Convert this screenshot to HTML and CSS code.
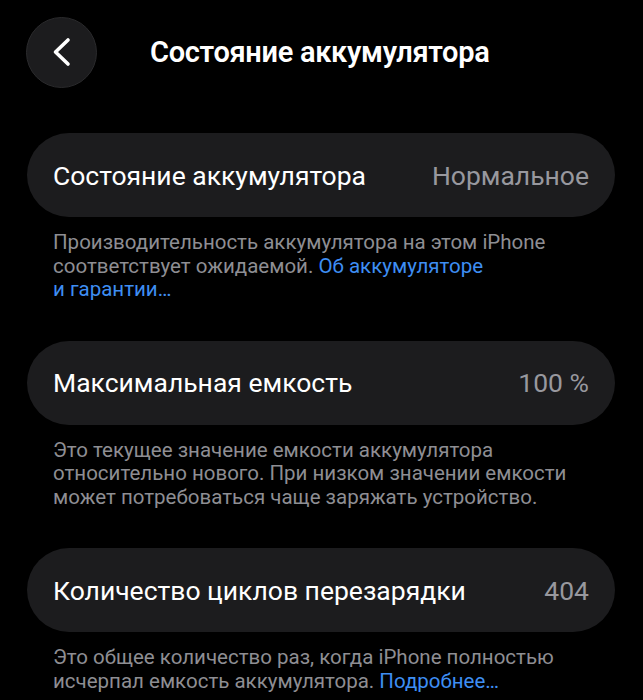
FILE: index.html
```html
<!DOCTYPE html>
<html>
<head>
    <title>Состояние аккумулятора</title>
    <link rel="stylesheet" href="styles.css">
</head>
<body>
    <header class="nav">
        <button class="back" aria-label="Назад">
            <svg width="20" height="30" viewBox="0 0 20 30">
                <path d="M16 3 L3.5 15 L16 27" fill="none" stroke="#fff" stroke-width="3.6" stroke-linecap="round" stroke-linejoin="round"/>
            </svg>
        </button>
        <h1 class="title">Состояние аккумулятора</h1>
    </header>

    <section class="group">
        <div class="cell">
            <span class="label">Состояние аккумулятора</span>
            <span class="value">Нормальное</span>
        </div>
        <p class="note">Производительность аккумулятора на этом iPhone соответствует ожидаемой. <a href="#">Об аккумуляторе и&nbsp;гарантии…</a></p>
    </section>

    <section class="group">
        <div class="cell">
            <span class="label">Максимальная емкость</span>
            <span class="value">100 %</span>
        </div>
        <p class="note">Это текущее значение емкости аккумулятора относительно нового. При низком значении емкости может потребоваться чаще заряжать устройство.</p>
    </section>

    <section class="group">
        <div class="cell">
            <span class="label">Количество циклов перезарядки</span>
            <span class="value">404</span>
        </div>
        <p class="note">Это общее количество раз, когда iPhone полностью исчерпал емкость аккумулятора. <a href="#">Подробнее…</a></p>
    </section>
</body>
</html>
```

FILE: styles.css
```css
body {
    margin: 0;
    background: #000;
    color: #fff;
    font-family: Roboto, "Liberation Sans", sans-serif;
    overflow: hidden;
}
.nav {
    display: flex;
    align-items: center;
    padding: 16px 0 0 26px;
    height: 72px;
}
.back {
    width: 71px;
    height: 71px;
    border-radius: 50%;
    background: #1c1c1e;
    border: 1px solid #2a2a2c;
    display: flex;
    align-items: center;
    justify-content: center;
    padding: 0;
}
.title {
    margin: 0 0 0 53px;
    font-size: 29px;
    font-weight: 600;
    letter-spacing: -0.3px;
}
.group {
    margin-top: 45px;
}
.group + .group {
    margin-top: 39px;
}
.cell {
    display: flex;
    justify-content: space-between;
    align-items: center;
    margin: 0 28px 0 27px;
    height: 84px;
    padding: 0 26px;
    border-radius: 42px;
    background: #1c1c1e;
    font-size: 26.5px;
}
.value {
    color: #98989e;
}
.note {
    margin: 14px 48px 0 53px;
    font-size: 20.5px;
    line-height: 23.5px;
    color: #8e8e93;
}
.note a {
    color: #3e8ef3;
    text-decoration: none;
}
```
